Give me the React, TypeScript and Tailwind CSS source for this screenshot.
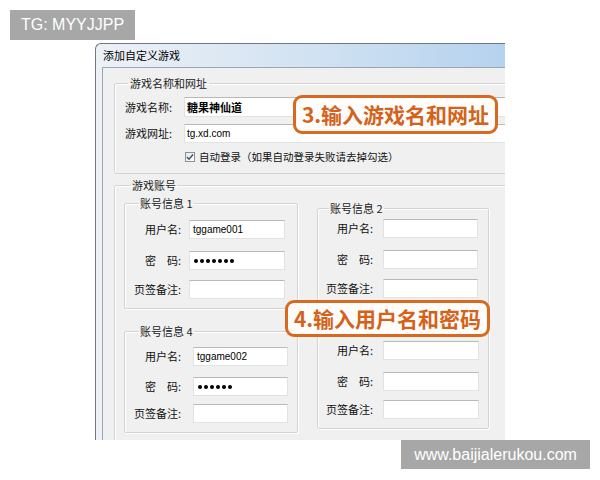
import React from "react";

const CJK = "font-['Noto_Sans_CJK_SC',_'Noto_Sans',_sans-serif]";

function Field({ value, dots, w, h = 19 }: { value?: string; dots?: number; w: number; h?: number }) {
  return (
    <div
      className="bg-white border border-[#e2e2e2] border-t-[#b9b9b9] flex items-center pl-[3px] overflow-hidden"
      style={{ width: w, height: h }}
    >
      {value && <span className="font-['Liberation_Sans',_Arial,_sans-serif] text-[10px] text-black leading-none">{value}</span>}
      {dots ? (
        <div className="flex gap-[2px] pl-[1px]">
          {Array.from({ length: dots }).map((_, i) => (
            <span key={i} className="block w-[4px] h-[4px] rounded-full bg-black" />
          ))}
        </div>
      ) : null}
    </div>
  );
}

type Row = { label: string; value?: string; dots?: number };

function AccountBox({
  title,
  rows,
  labelW,
  gap,
  fieldW,
  rowGaps,
  pt,
  pb,
  width,
  legendMl,
  padL,
}: {
  title?: string;
  rows: Row[];
  labelW: number;
  gap: number;
  fieldW: number;
  rowGaps: number[];
  pt: number;
  pb: number;
  width: number;
  legendMl: number;
  padL: number;
}) {
  return (
    <fieldset
      className="border border-[#d3d3d3] rounded-[2px] shadow-[inset_1px_1px_0_#ffffff,1px_1px_0_#ffffff]"
      style={{ width, paddingTop: pt, paddingBottom: pb, paddingLeft: padL }}
    >
      <legend className={`${CJK} text-[11px] leading-[14px] text-[#222] px-[1px]`} style={{ marginLeft: legendMl }}>
        {title ?? "\u00a0"}
      </legend>
      <div className="flex flex-col">
        {rows.map((r, i) => (
          <div key={i} className="flex items-center" style={{ marginTop: i === 0 ? 0 : rowGaps[i - 1], gap }}>
            <div className={`${CJK} text-[11px] text-[#111] text-right whitespace-pre`} style={{ width: labelW }}>
              {r.label}
            </div>
            <Field value={r.value} dots={r.dots} w={fieldW} />
          </div>
        ))}
      </div>
    </fieldset>
  );
}

function Callout({ text, className }: { text: string; className: string }) {
  return (
    <div
      className={`absolute flex items-center justify-center rounded-[9px] border-[3px] border-[#d8691f] bg-[#fffdfb] ${className}`}
    >
      <span className={`${CJK} text-[21px] font-bold text-[#d4621a] leading-none tracking-[0px]`}>{text}</span>
    </div>
  );
}

export default function App() {
  return (
    <div className="relative w-[600px] h-[480px] bg-white overflow-hidden">
      <div className="pt-[43px] pl-[95px]">
        <div className="w-[410px] h-[397px] overflow-hidden rounded-tl-[6px] border-l border-t border-[#6e7782] bg-gradient-to-r from-[#edf1f6] via-[#d3e3f2] to-[#b5d2ee] flex flex-col">
          <div className={`h-[23px] shrink-0 flex items-center pl-[7px] ${CJK} text-[11px] text-black`}>添加自定义游戏</div>
          <div className="flex-1 ml-[6px] border-l border-t border-[#9aa6b3] bg-[#f0f0f0]">
            <div className="w-[430px] pl-[11px] pt-[8px] flex flex-col">
              {/* Group 1 */}
              <fieldset className="border border-[#d3d3d3] rounded-[2px] shadow-[inset_1px_1px_0_#ffffff] pl-[10px] pt-[7px] pb-[9px]">
                <legend className={`${CJK} text-[11px] leading-[14px] text-[#222] ml-[3px] px-[2px]`}>游戏名称和网址</legend>
                <div className="flex flex-col">
                  <div className="flex items-center gap-[8px]">
                    <div className={`${CJK} text-[11px] text-[#111] w-[51px]`}>游戏名称:</div>
                    <div className="w-[330px] h-[20px] bg-white border border-[#e2e2e2] border-t-[#b9b9b9] flex items-center pl-[2px]">
                      <span className={`${CJK} text-[11px] font-semibold text-black leading-none`}>糖果神仙道</span>
                    </div>
                  </div>
                  <div className="flex items-center gap-[8px] mt-[7px]">
                    <div className={`${CJK} text-[11px] text-[#111] w-[51px]`}>游戏网址:</div>
                    <div className="w-[330px] h-[19px] bg-white border border-[#e2e2e2] border-t-[#b9b9b9] flex items-center pl-[2px]">
                      <span className="font-['Liberation_Sans',_Arial,_sans-serif] text-[10px] text-black leading-none">tg.xd.com</span>
                    </div>
                  </div>
                  <div className="flex items-center mt-[7px] pl-[60px] gap-[4px]">
                    <div className="w-[10px] h-[10px] border border-[#8e8f8f] bg-gradient-to-br from-[#e6e6e6] to-[#ffffff] flex items-center justify-center">
                      <svg width="8" height="8" viewBox="0 0 8 8">
                        <path d="M1 4 L3 6.2 L7 1.5" fill="none" stroke="#3b4f6a" strokeWidth="1.4" />
                      </svg>
                    </div>
                    <span className={`${CJK} text-[10.5px] text-[#111] leading-[14px]`}>自动登录（如果自动登录失败请去掉勾选）</span>
                  </div>
                </div>
              </fieldset>

              {/* Group 2 */}
              <fieldset className="mt-[4px] border border-[#d3d3d3] rounded-[2px] shadow-[inset_1px_1px_0_#ffffff] pl-[9px] pt-[4px] h-[300px]">
                <legend className={`${CJK} text-[11px] leading-[14px] text-[#222] ml-[7px] px-[1px]`}>游戏账号</legend>
                <div className="flex gap-[19px]">
                  <div className="flex flex-col gap-[15px]">
                    <AccountBox
                      title="账号信息 1"
                      rows={[
                        { label: "用户名:", value: "tggame001" },
                        { label: "密　码:", dots: 7 },
                        { label: "页签备注:" },
                      ]}
                      labelW={47}
                      gap={8}
                      fieldW={96}
                      rowGaps={[12, 10]}
                      pt={10}
                      pb={9}
                      width={174}
                      legendMl={5}
                      padL={9}
                    />
                    <AccountBox
                      title="账号信息 4"
                      rows={[
                        { label: "用户名:", value: "tggame002" },
                        { label: "密　码:", dots: 6 },
                        { label: "页签备注:" },
                      ]}
                      labelW={47}
                      gap={12}
                      fieldW={95}
                      rowGaps={[11, 8]}
                      pt={9}
                      pb={9}
                      width={174}
                      legendMl={5}
                      padL={9}
                    />
                  </div>
                  <div className="flex flex-col gap-[8px] pt-[5px]">
                    <AccountBox
                      title="账号信息 2"
                      rows={[{ label: "用户名:" }, { label: "密　码:" }, { label: "页签备注:" }]}
                      labelW={49}
                      gap={10}
                      fieldW={95}
                      rowGaps={[12, 10]}
                      pt={4}
                      pb={12}
                      width={172}
                      legendMl={5}
                      padL={6}
                    />
                    <AccountBox
                      rows={[{ label: "用户名:" }, { label: "密　码:" }, { label: "页签备注:" }]}
                      labelW={49}
                      gap={10}
                      fieldW={96}
                      rowGaps={[12, 9]}
                      pt={8}
                      pb={9}
                      width={172}
                      legendMl={5}
                      padL={6}
                    />
                  </div>
                </div>
              </fieldset>
            </div>
          </div>
        </div>
      </div>

      {/* Watermarks */}
      <div className="absolute left-[10px] top-[10px] w-[125px] h-[30px] bg-[#a7a7a7] flex items-center justify-center">
        <span className="font-['Liberation_Sans',_Arial,_sans-serif] text-[16px] text-white leading-none">TG: MYYJJPP</span>
      </div>
      <div className="absolute left-[401px] top-[440px] w-[189px] h-[29px] bg-[#a7a7a7] flex items-center justify-center">
        <span className="font-['Liberation_Sans',_Arial,_sans-serif] text-[16px] text-white leading-none">www.baijialerukou.com</span>
      </div>

      {/* Callouts */}
      <Callout text="3.输入游戏名和网址" className="left-[293px] top-[95px] w-[205px] h-[39px]" />
      <Callout text="4.输入用户名和密码" className="left-[285px] top-[300px] w-[205px] h-[37px]" />
    </div>
  );
}
